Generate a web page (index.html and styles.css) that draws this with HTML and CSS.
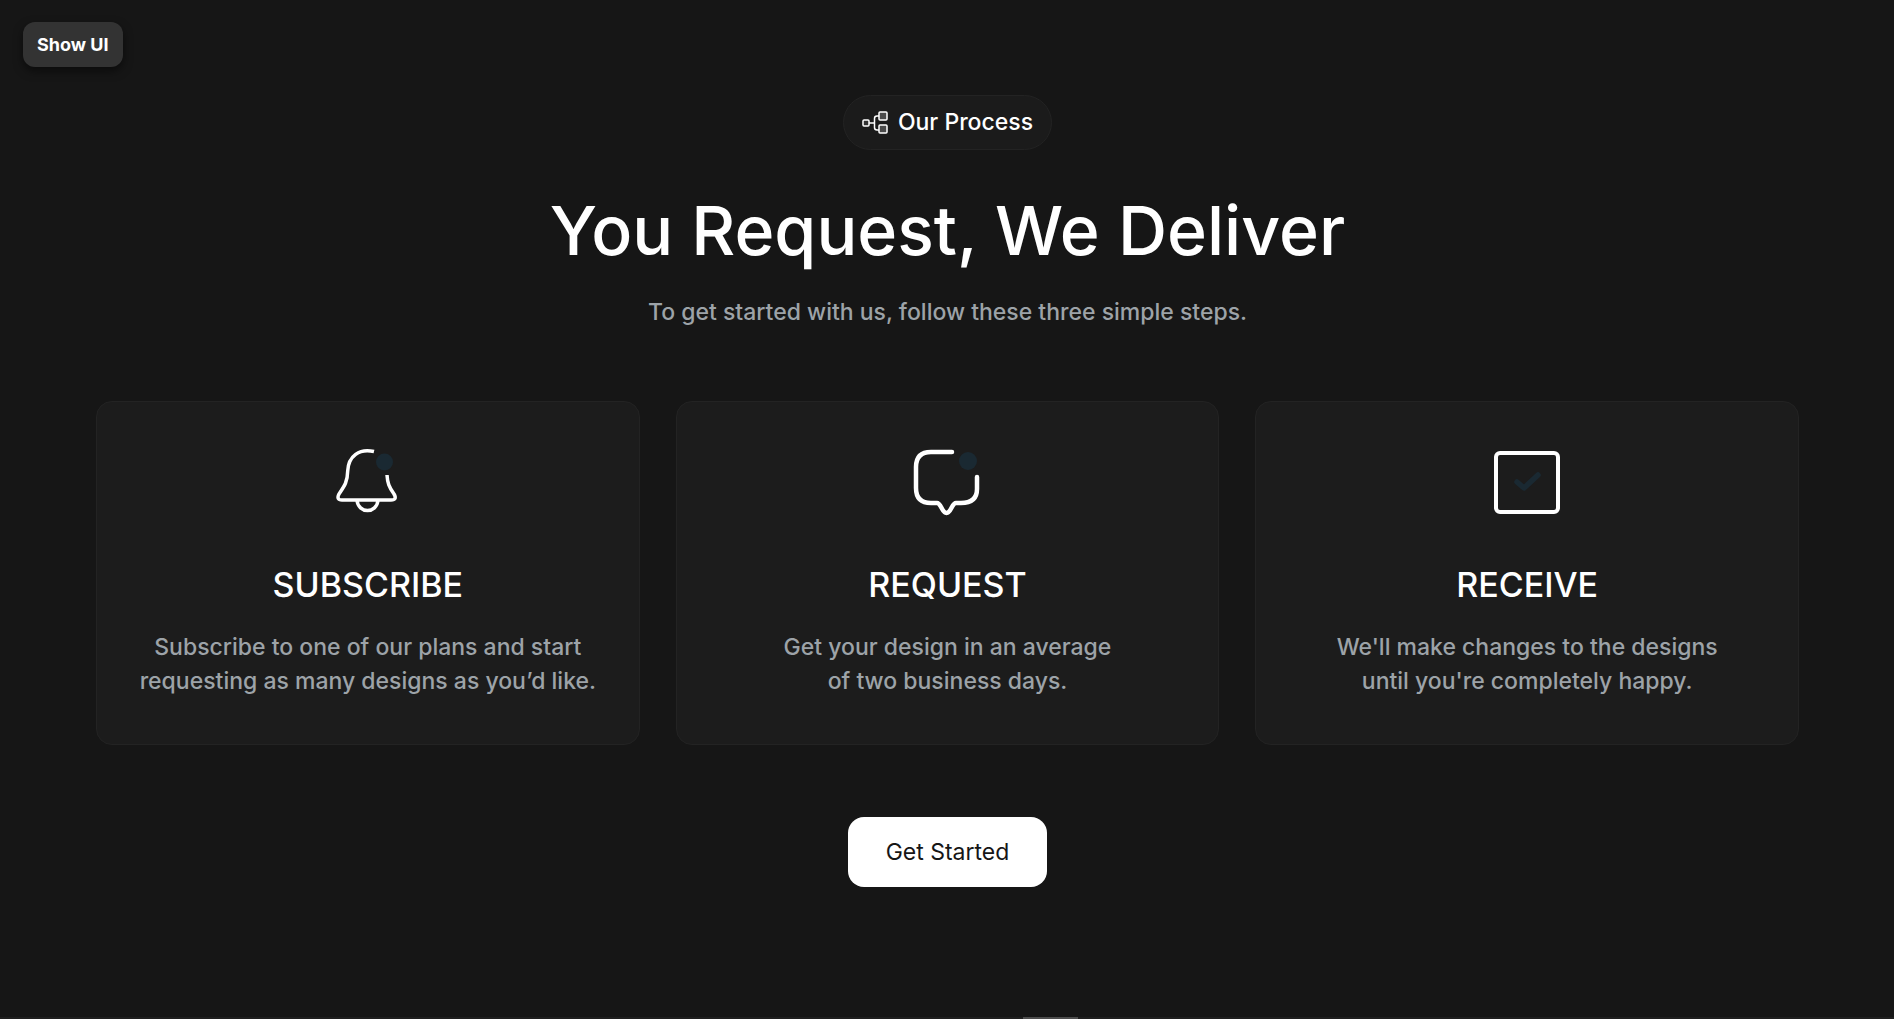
FILE: index.html
```html
<!DOCTYPE html>
<html lang="en">
<head>
<meta charset="utf-8">
<meta name="viewport" content="width=device-width, initial-scale=1">
<title>Our Process</title>
<link rel="stylesheet" href="styles.css">
</head>
<body>
<header class="toolbar">
  <button class="toggle" type="button">Show UI</button>
</header>
<main class="process">
  <div class="pill">
    <svg class="pill-icon" viewBox="0 0 26 24" fill="none" stroke="#fff" stroke-width="1.5" aria-hidden="true">
      <rect x="1" y="9" width="6" height="6" rx="1" fill="#333"/>
      <rect x="17" y="1" width="8" height="8" rx="1" fill="#4a4a4a"/>
      <rect x="17" y="14" width="8" height="8" rx="1" fill="#4a4a4a"/>
      <path d="M7 12h5.500M17 5h-2q-2.500 0-2.500 2.500v9q0 2.500 2.500 2.500h2"/>
    </svg>
    <span>Our Process</span>
  </div>
  <h1 class="title">You Request, We Deliver</h1>
  <p class="lead">To get started with us, follow these three simple steps.</p>
  <ul class="steps">
    <li class="card">
      <svg class="card-icon" viewBox="0 0 72 72" fill="none" stroke="#fff" stroke-width="3.500" aria-hidden="true">
        <path d="M42 7.500C27.500 4 16.300 12 15.700 27C15.500 38 12.500 42 7 50Q4 56 10 56H59Q65.500 56 62 50C57 43 55.500 39 55 31"/>
        <path d="M25 56C26 70 45 70 46 56"/>
        <circle cx="52.500" cy="18" r="8.500" fill="#1a2932" stroke="none"/>
      </svg>
      <h2 class="card-title">SUBSCRIBE</h2>
      <p class="card-text">Subscribe to one of our plans and start requesting as many designs as you’d like.</p>
    </li>
    <li class="card">
      <svg class="card-icon" viewBox="0 0 72 72" fill="none" stroke="#fff" stroke-width="4.500" stroke-linecap="round" stroke-linejoin="round" aria-hidden="true">
        <path d="M41 8H20Q5 8 5 23V44Q5 59 20 59H26C30 59 31 69 35.500 69C40 69 41 59 45 59H50Q66 59 66 45V33"/>
        <circle cx="57" cy="17" r="9" fill="#1a2932" stroke="none"/>
      </svg>
      <h2 class="card-title">REQUEST</h2>
      <p class="card-text">Get your design in an average<br>of two business days.</p>
    </li>
    <li class="card">
      <svg class="card-icon" viewBox="0 0 72 72" fill="none" stroke="#fff" stroke-width="4" aria-hidden="true">
        <rect x="5" y="9" width="62" height="59" rx="4"/>
        <path d="M26 38L33 44L47 31" stroke="#1a2932" stroke-width="5.500" stroke-linecap="round" stroke-linejoin="round"/>
      </svg>
      <h2 class="card-title">RECEIVE</h2>
      <p class="card-text">We'll make changes to the designs<br>until you're completely happy.</p>
    </li>
  </ul>
  <button class="cta" type="button">Get Started</button>
</main>
<footer class="next"><span class="handle"></span></footer>
</body>
</html>
```
FILE: styles.css
```css
* {
  box-sizing: border-box;
}

body {
  display: flex;
  flex-direction: column;
  min-height: 100vh;
  margin: 0;
  background: #161616;
  color: #fff;
  font-family: Inter, "Liberation Sans", sans-serif;
}

button {
  border: 0;
  font-family: inherit;
}

.toolbar {
  padding: 22px 23px 0;
}

.toggle {
  display: block;
  padding: 12px 14px;
  border-radius: 12px;
  background: #333;
  color: #fff;
  font-size: 18px;
  font-weight: 700;
  line-height: 21px;
  box-shadow: 0 4px 10px rgba(0, 0, 0, 0.5);
}

.process {
  display: flex;
  flex: 1;
  flex-direction: column;
  align-items: center;
  padding: 28px 95px 64px 96px;
}

.pill {
  display: flex;
  align-items: center;
  gap: 10px;
  padding: 12px 18px;
  border: 1px solid #232323;
  border-radius: 28px;
  background: #1b1b1b;
  font-size: 23px;
  font-weight: 500;
  line-height: 29px;
}

.pill-icon {
  width: 26px;
  height: 24px;
}

.title {
  margin: 36px 0 0;
  font-size: 68px;
  font-weight: 500;
  line-height: 88px;
  text-align: center;
}

.lead {
  margin: 21px 0 0;
  color: #9da3a8;
  font-size: 23px;
  font-weight: 500;
  line-height: 34px;
  text-align: center;
}

.steps {
  display: grid;
  grid-template-columns: repeat(auto-fit, minmax(320px, 1fr));
  gap: 36px;
  width: 100%;
  margin: 72px 0;
  padding: 0;
  list-style: none;
}

.card {
  display: flex;
  flex-direction: column;
  align-items: center;
  padding: 42px 36px 46px;
  border: 1px solid #232323;
  border-radius: 16px;
  background: #1c1c1c;
  text-align: center;
}

.card-icon {
  width: 72px;
  height: 72px;
}

.card-title {
  margin: 46px 0 0;
  font-size: 34px;
  font-weight: 500;
  line-height: 46px;
}

.card-text {
  margin: 22px 0 0;
  color: #9da3a8;
  font-size: 23px;
  font-weight: 500;
  line-height: 34px;
}

.cta {
  padding: 18px 38px;
  border-radius: 16px;
  background: #fff;
  color: #161616;
  font-size: 23px;
  line-height: 34px;
}

.next {
  height: 2px;
  background: #1f1f1f;
}

.handle {
  display: block;
  width: 55px;
  height: 2px;
  margin-left: 54%;
  background: #4d4d4d;
}
```
